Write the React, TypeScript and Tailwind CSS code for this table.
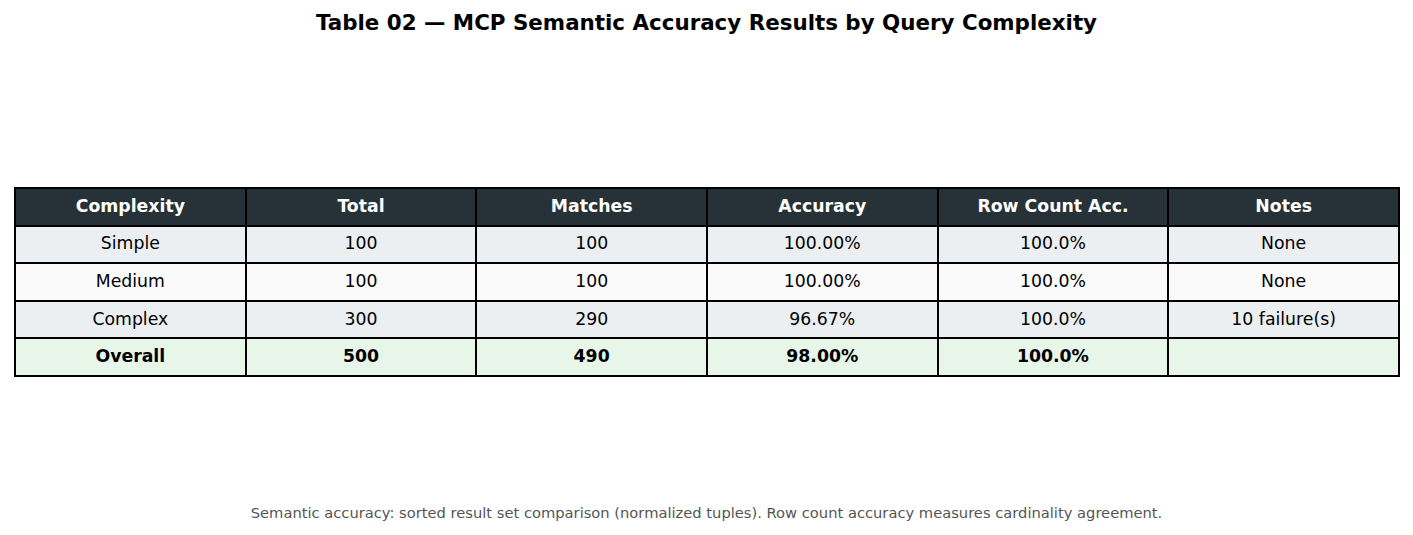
const headers = ["Complexity", "Total", "Matches", "Accuracy", "Row Count Acc.", "Notes"];

const rows = [
    { cells: ["Simple", "100", "100", "100.00%", "100.0%", "None"], bg: "bg-[#eceff1]" },
    { cells: ["Medium", "100", "100", "100.00%", "100.0%", "None"], bg: "bg-[#fafafa]" },
    { cells: ["Complex", "300", "290", "96.67%", "100.0%", "10 failure(s)"], bg: "bg-[#eceff1]" },
];

const overall = ["Overall", "500", "490", "98.00%", "100.0%", ""];

export default function App() {
    return (
        <div className="w-[1413px] h-[535px] bg-white flex flex-col items-center font-['DejaVu_Sans',sans-serif]">
            <h1 className="mt-[9px] text-[21.4px] leading-[28px] font-bold text-black">
                Table 02 — MCP Semantic Accuracy Results by Query Complexity
            </h1>
            <table className="mt-[150px] ml-[1px] w-[1386px] table-fixed border-collapse text-[17.3px] text-black">
                <thead>
                    <tr className="h-[37.6px] bg-[#263238]">
                        {headers.map((h) => (
                            <th key={h} className="border-2 border-black font-bold text-white text-center p-0">
                                {h}
                            </th>
                        ))}
                    </tr>
                </thead>
                <tbody>
                    {rows.map((r) => (
                        <tr key={r.cells[0]} className={`h-[37.6px] ${r.bg}`}>
                            {r.cells.map((c, i) => (
                                <td key={i} className="border-2 border-black text-center p-0">
                                    {c}
                                </td>
                            ))}
                        </tr>
                    ))}
                    <tr className="h-[37.6px] bg-[#e8f5e9]">
                        {overall.map((c, i) => (
                            <td key={i} className="border-2 border-black text-center font-bold p-0">
                                {c}
                            </td>
                        ))}
                    </tr>
                </tbody>
            </table>
            <p className="mt-[126px] text-[14.7px] leading-[20px] text-[#555555]">
                Semantic accuracy: sorted result set comparison (normalized tuples). Row count accuracy measures cardinality agreement.
            </p>
        </div>
    );
}
